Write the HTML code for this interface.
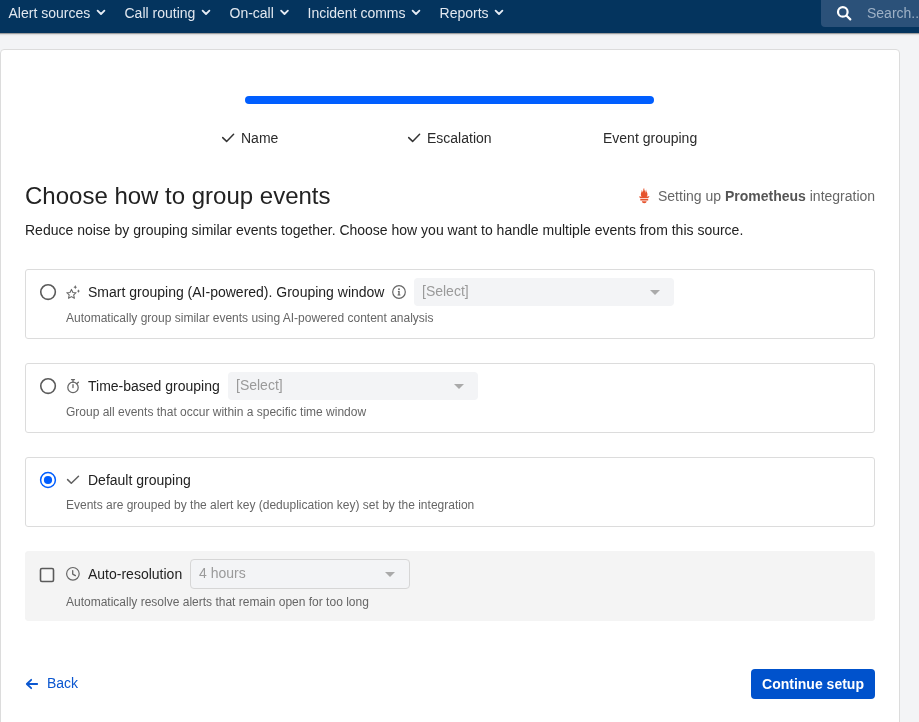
<!DOCTYPE html>
<html><head><meta charset="utf-8">
<style>
*{box-sizing:border-box;margin:0;padding:0}
html,body{width:919px;height:722px;overflow:hidden}
body>*{will-change:transform}
body{-webkit-font-smoothing:antialiased;background:#f3f4f6;font-family:"Liberation Sans",sans-serif;color:#222;position:relative}
svg{position:absolute;overflow:visible}
.hdr{position:absolute;left:0;top:0;width:919px;height:33px;background:#04345e;}
.hdrsh{position:absolute;left:-20px;top:0;width:960px;height:33px;box-shadow:0 1px 1px rgba(0,0,0,.3),0 1px 3px rgba(0,0,0,.12)}
.nav{position:absolute;top:5px;font-size:14px;color:#e2e8f0;white-space:nowrap;line-height:16px}
.search{position:absolute;left:821px;top:-4px;width:110px;height:31px;background:#2b5179;border-radius:4px}
.search span{position:absolute;left:46px;top:9px;font-size:14px;line-height:16px;color:#9eb1c6;white-space:nowrap}
.card{position:absolute;left:0;top:49px;width:900px;height:700px;background:#fff;border:1px solid #dcdcdc;border-radius:4px}
.abs{position:absolute;white-space:nowrap}
.bar{position:absolute;left:245px;top:96px;width:409px;height:8px;background:#005eff;border-radius:4px}
.step{position:absolute;top:130px;font-size:14px;line-height:16px;color:#2b2b2b;white-space:nowrap}
h1{position:absolute;left:25px;top:182px;font-size:24px;font-weight:normal;line-height:28px;color:#222;white-space:nowrap}
.sub{left:25px;top:222px;font-size:14px;line-height:16px;color:#222}
.prom{right:44px;top:188px;font-size:14px;line-height:16px;color:#666}
.prom b{color:#555}
.opt{position:absolute;left:25px;width:850px;height:70px;border:1px solid #dcdcdc;border-radius:3px;background:#fff}
.opt.grey{background:#f4f4f4;border-color:#f4f4f4}
.lbl{position:absolute;left:62px;top:14px;font-size:14px;line-height:16px;color:#222;white-space:nowrap}
.desc{position:absolute;left:40px;top:41px;font-size:12px;line-height:14px;color:#666;white-space:nowrap}
.sel{position:absolute;height:28px;background:#f3f4f6;border-radius:4px}
.sel span{position:absolute;left:8px;top:5px;font-size:14px;line-height:16px;color:#9a9a9a}
.sel i{position:absolute;right:14px;top:12px;width:0;height:0;border-left:5px solid transparent;border-right:5px solid transparent;border-top:5px solid #aaa}
.back{left:47px;top:675px;font-size:14px;line-height:16px;color:#0b57d0}
.btn{position:absolute;left:751px;top:669px;width:124px;height:30px;background:#0052cc;border-radius:4px;color:#fff;font-weight:bold;font-size:14px;line-height:30px;text-align:center}
</style></head><body>
<div class="hdrsh"></div>
<div class="hdr">
  <div class="nav" style="left:8.5px">Alert sources</div>
  <div class="nav" style="left:124.5px">Call routing</div>
  <div class="nav" style="left:229.5px">On-call</div>
  <div class="nav" style="left:307.5px">Incident comms</div>
  <div class="nav" style="left:439.6px">Reports</div>
  <svg width="919" height="33" style="left:0;top:0.4px" fill="none" stroke="#e6ecf5" stroke-width="1.8" stroke-linecap="round" stroke-linejoin="round">
    <path d="M97.6 10.6L101 14L104.4 10.6"/>
    <path d="M202.6 10.6L206 14L209.4 10.6"/>
    <path d="M281.1 10.6L284.5 14L287.9 10.6"/>
    <path d="M412.6 10.6L416 14L419.4 10.6"/>
    <path d="M495.6 10.6L499 14L502.4 10.6"/>
  </svg>
  <div class="search"><span>Search...</span></div>
  <svg width="919" height="33" style="left:0;top:0" fill="none" stroke="#fff" stroke-width="2.2" stroke-linecap="round">
    <circle cx="842.8" cy="11.9" r="4.8"/>
    <path d="M846.6 15.7L850.3 19.4"/>
  </svg>
</div>
<div class="card"></div>
<div class="bar"></div>
<svg width="919" height="722" style="left:0;top:0" fill="none" stroke="#333" stroke-width="1.5" stroke-linecap="round" stroke-linejoin="round">
  <path d="M222.7 137.6L226.6 141.4L233.6 134.2"/>
  <path d="M408.7 137.6L412.6 141.4L419.6 134.2"/>
</svg>
<div class="step" style="left:241px">Name</div>
<div class="step" style="left:427px">Escalation</div>
<div class="step" style="left:602.5px">Event grouping</div>
<h1>Choose how to group events</h1>
<svg width="10.5" height="15.3" viewBox="48 14 160 228" preserveAspectRatio="none" style="left:638.9px;top:188.4px" fill="#e6522c">
  <path d="M128.001 240.227c-20.112 0-36.419-13.435-36.419-30.004h72.838c0 16.566-16.306 30.004-36.419 30.004z"/>
  <path d="M188.154 200.287H67.842V178.47h120.314v21.816h-.002z"/>
  <path d="M187.722 167.242H68.185c-.398-.458-.804-.91-1.188-1.375-12.315-14.954-15.216-22.76-18.032-30.716-.048-.262 14.933 3.06 25.556 5.45 0 0 5.466 1.265 13.458 2.722-7.673-8.994-12.23-20.428-12.23-32.116 0-25.658 19.68-48.079 12.58-66.201 6.91.562 14.3 14.583 14.8 36.505 7.346-10.152 10.42-28.690 10.42-40.056 0-11.769 7.755-25.44 15.512-25.907-6.915 11.396 1.79 21.165 9.53 45.4 2.902 9.103 2.532 24.424 4.772 34.138.744-20.176 4.213-49.615 17.014-59.78-5.647 12.8.836 28.818 5.27 36.518 7.154 12.424 11.49 21.836 11.49 39.638 0 11.936-4.407 23.173-11.84 31.958 8.452-1.586 14.289-3.016 14.289-3.016l27.45-5.355c.002-.002-3.987 16.401-19.314 32.197z"/>
</svg>
<div class="abs prom">Setting up <b>Prometheus</b> integration</div>
<div class="abs sub">Reduce noise by grouping similar events together. Choose how you want to handle multiple events from this source.</div>

<div class="opt" style="top:269px">
  <div class="lbl">Smart grouping (AI-powered). Grouping window</div>
  <div class="sel" style="left:388px;top:8px;width:260px"><span>[Select]</span><i></i></div>
  <div class="desc">Automatically group similar events using AI-powered content analysis</div>
</div>
<div class="opt" style="top:363px">
  <div class="lbl">Time-based grouping</div>
  <div class="sel" style="left:202px;top:8px;width:250px"><span>[Select]</span><i></i></div>
  <div class="desc">Group all events that occur within a specific time window</div>
</div>
<div class="opt" style="top:457px">
  <div class="lbl">Default grouping</div>
  <div class="desc" style="top:40px">Events are grouped by the alert key (deduplication key) set by the integration</div>
</div>
<div class="opt grey" style="top:551px">
  <div class="lbl">Auto-resolution</div>
  <div class="sel" style="left:164px;top:7px;width:220px;height:30px;border:1px solid #d6d6d6"><span style="left:8px;top:5px">4 hours</span><i style="top:12px;right:14px"></i></div>
  <div class="desc" style="top:43px">Automatically resolve alerts that remain open for too long</div>
</div>

<svg width="919" height="722" style="left:0;top:0" fill="none" stroke="#606060" stroke-width="1.6" stroke-linecap="round" stroke-linejoin="round">
  <!-- radios -->
  <circle cx="48.05" cy="292.1" r="7.3" stroke="#5a5a5a"/>
  <circle cx="48.05" cy="386.1" r="7.3" stroke="#5a5a5a"/>
  <circle cx="48" cy="480" r="7.4" stroke="#005eff" stroke-width="1.5"/>
  <circle cx="48" cy="480" r="4.1" fill="#005eff" stroke="none"/>
  <!-- checkbox -->
  <rect x="40.5" y="568.5" width="13" height="13" rx="1.4" fill="#f7f7f7" stroke="#5a5a5a" stroke-width="1.6"/>
  <!-- star -->
  <path stroke-width="1.05" stroke="#666" d="M71.45 289.4L72.9 292.4L76.1 292.7L73.7 294.9L74.4 298.3L71.45 296.6L68.5 298.3L69.2 294.9L66.8 292.7L70 292.4Z"/>
  <path stroke="none" fill="#666" d="M75.26 285.11L75.89 286.48L77.16 287.16L75.89 287.84L75.26 289.21L74.63 287.84L73.36 287.16L74.63 286.48Z"/>
  <path stroke="none" fill="#666" d="M78.45 289.20L78.95 290.47L79.95 291.1L78.95 291.73L78.45 293.00L77.95 291.73L76.95 291.1L77.95 290.47Z"/>
  <!-- timer -->
  <circle cx="73" cy="387.4" r="5.2" stroke-width="1.25" stroke="#666"/>
  <path stroke-width="1.3" stroke="#666" d="M71.5 379.6H74.5M73 379.6V382.2M73 384.6V387.6M76.9 383.6L78.4 382.2"/>
  <!-- check -->
  <path stroke-width="1.5" d="M67.6 479.6L71.3 483.2L78.5 476.3"/>
  <!-- clock -->
  <circle cx="72.9" cy="573.8" r="6.3" stroke-width="1.2" stroke="#666"/>
  <path stroke-width="1.3" stroke="#666" d="M72.7 570.6V574.1L75.4 575.6"/>
  <!-- info -->
</svg>
<svg width="919" height="722" style="left:0;top:0" fill="none" stroke="#666" stroke-width="1.2">
  <circle cx="399" cy="292" r="6.3"/>
  <path stroke="none" fill="#666" d="M397.9 291.1H399.7V294.6H400.4V295.6H397.6V294.6H398.3V292.1H397.9Z"/>
  <circle cx="399" cy="289.2" r="0.95" fill="#666" stroke="none"/>
</svg>

<svg width="919" height="722" style="left:0;top:0" fill="none" stroke="#0b57d0" stroke-width="1.8" stroke-linecap="round" stroke-linejoin="round">
  <path d="M26.8 684H37.2M31.2 679.8L26.8 684L31.2 688.2"/>
</svg>
<div class="abs back">Back</div>
<div class="btn">Continue setup</div>
</body></html>
